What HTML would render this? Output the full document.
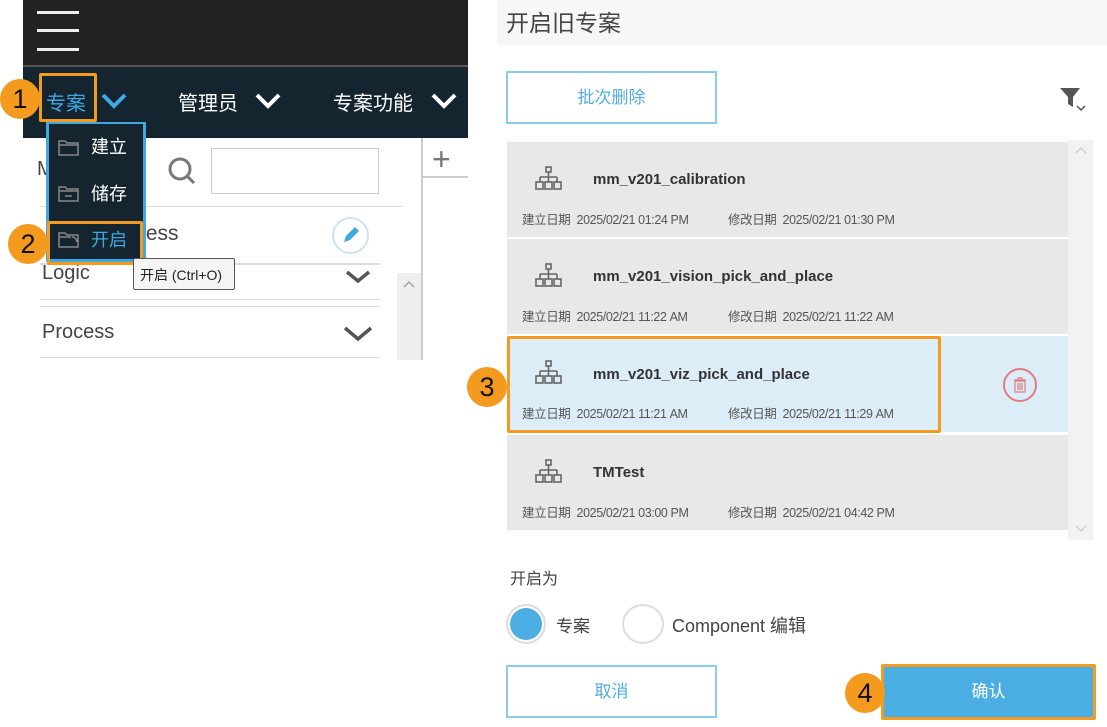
<!DOCTYPE html>
<html><head><meta charset="utf-8"><style>
*{box-sizing:border-box;margin:0;padding:0}
body{width:1107px;height:727px;background:#fff;position:relative;overflow:hidden;font-family:"Liberation Sans","Noto Sans CJK SC",sans-serif}
.a{position:absolute}
.badge{position:absolute;width:40px;height:40px;border-radius:50%;background:#f49a1f;color:#111;font-size:27px;line-height:40px;text-align:center}
.card{position:absolute;left:507px;width:561px;height:95px;background:#e8e8e8}
.card .t{position:absolute;left:86px;top:28px;font-weight:bold;font-size:15px;color:#333}
.card .d{position:absolute;top:67px;font-size:12.5px;color:#555;letter-spacing:-0.4px}
.card svg{position:absolute;left:28px;top:24px}
.sep{position:absolute;height:2px;background:#ddd}
</style></head><body>
<!-- LEFT -->
<div class="a" style="left:23px;top:0;width:445px;height:65px;background:#202224"></div>
<div class="a" style="left:37px;top:11px;width:42px;height:3px;background:#eee"></div>
<div class="a" style="left:37px;top:29px;width:42px;height:3px;background:#eee"></div>
<div class="a" style="left:37px;top:48px;width:42px;height:3px;background:#eee"></div>
<div class="a" style="left:23px;top:65px;width:445px;height:2px;background:#555"></div>
<div class="a" style="left:23px;top:67px;width:445px;height:71px;background:#142530"></div>
<div class="a" style="left:46px;top:87px;font-size:20px;color:#3fa8e0">专案</div>
<svg class="a" style="left:100px;top:92px" width="28" height="18"><path d="M3 3l11 11 11-11" stroke="#3fa8e0" stroke-width="4" fill="none"/></svg>
<div class="a" style="left:178px;top:87px;font-size:20px;color:#fff">管理员</div>
<svg class="a" style="left:254px;top:92px" width="28" height="18"><path d="M3 3l11 11 11-11" stroke="#fff" stroke-width="4" fill="none"/></svg>
<div class="a" style="left:333px;top:87px;font-size:20px;color:#fff">专案功能</div>
<svg class="a" style="left:430px;top:92px" width="28" height="18"><path d="M3 3l11 11 11-11" stroke="#fff" stroke-width="4" fill="none"/></svg>
<div class="a" style="left:39px;top:73px;width:58px;height:49px;border:3px solid #f49a1f;border-radius:2px"></div>
<div class="badge" style="left:0;top:79px">1</div>

<div class="a" style="left:37px;top:158px;font-size:20px;color:#444">M</div>
<svg class="a" style="left:166px;top:155px" width="32" height="32"><circle cx="14" cy="14" r="10" stroke="#777" stroke-width="3" fill="none"/><path d="M21 21l7 7" stroke="#777" stroke-width="3"/></svg>
<div class="a" style="left:211px;top:148px;width:168px;height:46px;border:1px solid #ccc"></div>
<div class="a" style="left:421px;top:138px;width:2px;height:222px;background:#ccc"></div>
<div class="a" style="left:421px;top:176px;width:47px;height:2px;background:#ccc"></div>
<div class="a" style="left:432px;top:144px;font-size:32px;color:#777;line-height:30px;font-weight:300">+</div>
<div class="sep" style="left:40px;top:206px;width:363px;height:1px"></div>
<div class="a" style="left:140px;top:222px;font-size:21px;color:#444">tess</div>
<div class="a" style="left:332px;top:217px;width:37px;height:37px;border:2px solid #cfe3ee;border-radius:50%"></div>
<svg class="a" style="left:340px;top:224px" width="22" height="22"><path d="M4 18l2-6 9-9 4 4-9 9z" fill="#3fa8e0"/></svg>
<div class="sep" style="left:40px;top:263px;width:340px"></div>
<div class="a" style="left:42px;top:265px;font-size:20px;color:#444;height:20px;overflow:hidden;line-height:16px">Logic</div>
<svg class="a" style="left:344px;top:270px" width="28" height="14"><path d="M3 2l11 9 11-9" stroke="#555" stroke-width="3.5" fill="none"/></svg>
<div class="sep" style="left:40px;top:299px;width:340px;height:1px"></div>
<div class="sep" style="left:40px;top:306px;width:340px;height:1px"></div>
<div class="a" style="left:42px;top:321px;font-size:20px;color:#444">Process</div>
<svg class="a" style="left:342px;top:325px" width="32" height="18"><path d="M3 3l13 11 13-11" stroke="#555" stroke-width="3.5" fill="none"/></svg>
<div class="sep" style="left:40px;top:357px;width:340px;height:1px"></div>
<div class="a" style="left:397px;top:273px;width:24px;height:87px;background:#efefef"></div>
<svg class="a" style="left:402px;top:280px" width="14" height="10"><path d="M2 7l5-5 5 5" stroke="#999" stroke-width="1.3" fill="none"/></svg>

<div class="a" style="left:46px;top:122px;width:100px;height:140px;background:#142530;border:3px solid #3fa8e0;border-top:none"></div>
<div class="a" style="left:47px;top:122px;width:98px;height:2px;background:#3fa8e0"></div>
<svg class="a" style="left:58px;top:137px" width="22" height="20"><path d="M1 4h6l2 2h11v12H1z M1 8h19" stroke="#888" stroke-width="1.5" fill="none"/></svg>
<div class="a" style="left:91px;top:133px;font-size:18px;color:#fff">建立</div>
<svg class="a" style="left:58px;top:183px" width="22" height="20"><path d="M1 4h6l2 2h11v12H1z M1 8h19 M7 13h7" stroke="#888" stroke-width="1.5" fill="none"/></svg>
<div class="a" style="left:91px;top:180px;font-size:18px;color:#fff">储存</div>
<svg class="a" style="left:58px;top:229px" width="22" height="20"><path d="M1 4h6l2 2h11v12H1z M1 8h12 M14 8q4 0 5 5" stroke="#888" stroke-width="1.5" fill="none"/></svg>
<div class="a" style="left:91px;top:226px;font-size:18px;color:#3fa8e0">开启</div>
<div class="a" style="left:47px;top:221px;width:96px;height:44px;border:3px solid #f49a1f;border-radius:2px"></div>
<div class="badge" style="left:8px;top:224px">2</div>
<div class="a" style="left:133px;top:258px;width:102px;height:32px;border:1px solid #555;background:#f4f4f4;border-radius:2px;font-size:14px;color:#222;padding:6px 0 0 6px;white-space:nowrap">开启 (Ctrl+O)</div>

<!-- RIGHT -->
<div class="a" style="left:497px;top:0;width:610px;height:45px;background:#f7f7f7"></div>
<div class="a" style="left:506px;top:4px;font-size:23px;color:#444">开启旧专案</div>
<div class="a" style="left:506px;top:71px;width:211px;height:53px;border:2px solid #8ccbe9;color:#53ace0;font-size:17px;text-align:center;line-height:49px">批次删除</div>
<svg class="a" style="left:1058px;top:86px" width="34" height="30"><path d="M2 2h20l-7 9v10l-5-3v-7z" fill="#555"/><path d="M19 20l4 4 4-4" stroke="#555" stroke-width="1.5" fill="none"/></svg>

<div class="a" style="left:1068px;top:140px;width:25px;height:400px;background:#f2f2f2"></div>
<svg class="a" style="left:1074px;top:146px" width="14" height="10"><path d="M2 7l5-5 5 5" stroke="#ccc" stroke-width="1.3" fill="none"/></svg>
<svg class="a" style="left:1074px;top:524px" width="14" height="10"><path d="M2 2l5 5 5-5" stroke="#ccc" stroke-width="1.3" fill="none"/></svg>

<div class="card" style="top:142px"><svg width="28" height="28"><g stroke="#666" stroke-width="1.6" fill="none"><rect x="11" y="1" width="5" height="5"/><path d="M13.5 6v5M5 11h17M5 11v5M22 11v5M13.5 11v5"/><rect x="1" y="16" width="7" height="7"/><rect x="10" y="16" width="7" height="7"/><rect x="19" y="16" width="7" height="7"/></g></svg><div class="t" style="top:29px">mm_v201_calibration</div><div class="d" style="left:15px">建立日期&nbsp; 2025/02/21 01:24 PM</div><div class="d" style="left:221px">修改日期&nbsp; 2025/02/21 01:30 PM</div></div>
<div class="card" style="top:239px"><svg width="28" height="28"><g stroke="#666" stroke-width="1.6" fill="none"><rect x="11" y="1" width="5" height="5"/><path d="M13.5 6v5M5 11h17M5 11v5M22 11v5M13.5 11v5"/><rect x="1" y="16" width="7" height="7"/><rect x="10" y="16" width="7" height="7"/><rect x="19" y="16" width="7" height="7"/></g></svg><div class="t" style="top:29px">mm_v201_vision_pick_and_place</div><div class="d" style="left:15px">建立日期&nbsp; 2025/02/21 11:22 AM</div><div class="d" style="left:221px">修改日期&nbsp; 2025/02/21 11:22 AM</div></div>
<div class="card" style="top:336px;background:#dcedf8;height:96px"><svg width="28" height="28"><g stroke="#666" stroke-width="1.6" fill="none"><rect x="11" y="1" width="5" height="5"/><path d="M13.5 6v5M5 11h17M5 11v5M22 11v5M13.5 11v5"/><rect x="1" y="16" width="7" height="7"/><rect x="10" y="16" width="7" height="7"/><rect x="19" y="16" width="7" height="7"/></g></svg><div class="t" style="top:30px">mm_v201_viz_pick_and_place</div><div class="d" style="left:15px">建立日期&nbsp; 2025/02/21 11:21 AM</div><div class="d" style="left:221px">修改日期&nbsp; 2025/02/21 11:29 AM</div>
<div class="a" style="left:496px;top:32px;width:34px;height:34px;border:2px solid #e27a80;border-radius:50%"></div>
<svg class="a" style="left:505px;top:40px" width="16" height="18"><path d="M2 4h12M6 4V2h4v2M3 5h10v11H3zM6 7v7M8 7v7M10 7v7" stroke="#e27a80" stroke-width="1.2" fill="none"/></svg></div>
<div class="a" style="left:507px;top:336px;width:434px;height:97px;border:3px solid #f49a1f;border-radius:2px"></div>
<div class="badge" style="left:467px;top:367px">3</div>
<div class="card" style="top:435px"><svg width="28" height="28"><g stroke="#666" stroke-width="1.6" fill="none"><rect x="11" y="1" width="5" height="5"/><path d="M13.5 6v5M5 11h17M5 11v5M22 11v5M13.5 11v5"/><rect x="1" y="16" width="7" height="7"/><rect x="10" y="16" width="7" height="7"/><rect x="19" y="16" width="7" height="7"/></g></svg><div class="t" style="top:29px">TMTest</div><div class="d" style="left:15px">建立日期&nbsp; 2025/02/21 03:00 PM</div><div class="d" style="left:221px">修改日期&nbsp; 2025/02/21 04:42 PM</div></div>

<div class="a" style="left:510px;top:565px;font-size:16px;color:#444">开启为</div>
<div class="a" style="left:506px;top:604px;width:40px;height:40px;border:2px solid #ddd;border-radius:50%;background:#fff"></div>
<div class="a" style="left:510px;top:608px;width:32px;height:32px;border-radius:50%;background:#4aaee3"></div>
<div class="a" style="left:556px;top:612px;font-size:17px;color:#444">专案</div>
<div class="a" style="left:622px;top:604px;width:42px;height:40px;border:2px solid #ddd;border-radius:50%"></div>
<div class="a" style="left:672px;top:612px;font-size:18px;color:#444">Component 编辑</div>

<div class="a" style="left:506px;top:665px;width:211px;height:53px;border:2px solid #8ccbe9;color:#53ace0;font-size:17px;text-align:center;line-height:49px">取消</div>
<div class="a" style="left:881px;top:664px;width:215px;height:56px;background:#4aaee3;border:3px solid #f49a1f;border-radius:2px;color:#fff;font-size:17px;text-align:center;line-height:50px">确认</div>
<div class="badge" style="left:845px;top:673px">4</div>
</body></html>
